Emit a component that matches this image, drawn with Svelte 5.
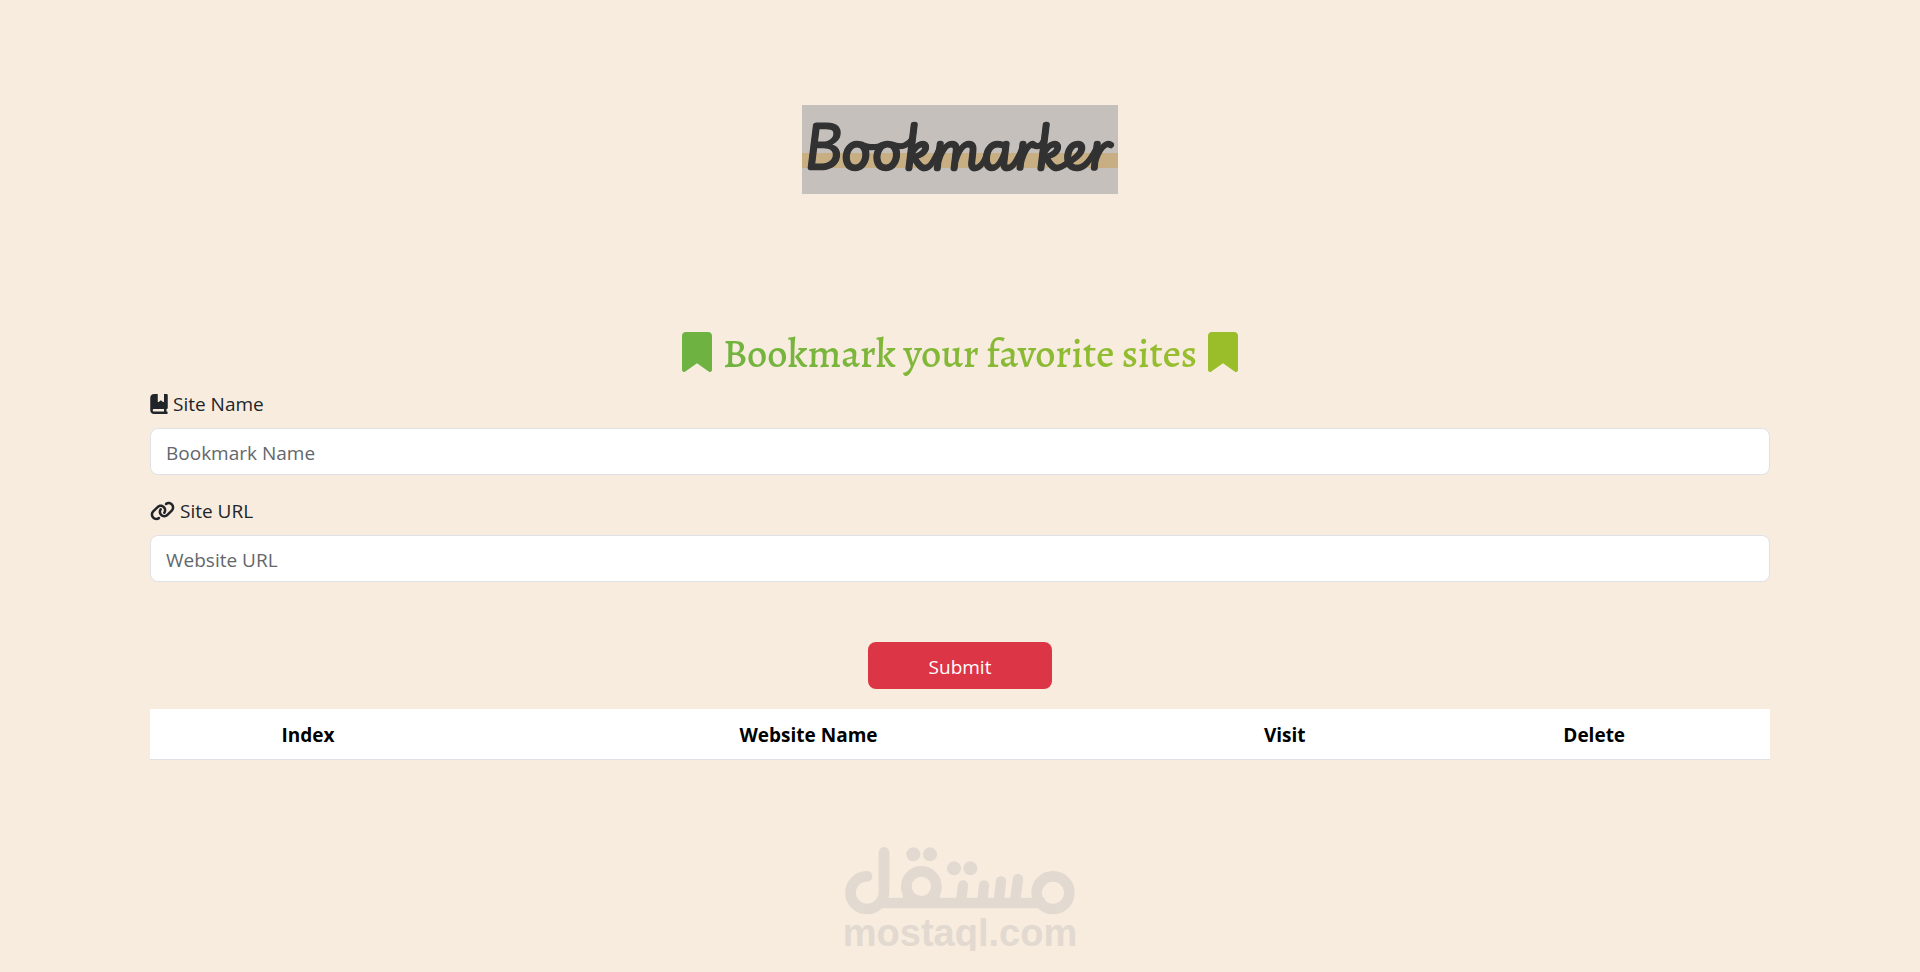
<script>
	let siteName = $state('');
	let siteUrl = $state('');
	let bookmarks = $state([]);

	function addBookmark(event) {
		event.preventDefault();
		if (!siteName || !siteUrl) return;
		bookmarks.push({ name: siteName, url: siteUrl });
		siteName = '';
		siteUrl = '';
	}

	function removeBookmark(index) {
		bookmarks.splice(index, 1);
	}
</script>

{#snippet bookmarkIcon(color)}
	<svg class="bookmark-icon {color}" viewBox="0 0 384 512" aria-hidden="true">
		<path d="M0 48V487.700C0 501.100 10.900 512 24.300 512c5 0 9.900-1.500 14-4.400L192 400 345.700 507.600c4.100 2.900 9 4.400 14 4.400c13.400 0 24.300-10.900 24.300-24.300V48c0-26.500-21.500-48-48-48H48C21.500 0 0 21.500 0 48z" />
	</svg>
{/snippet}

<main class="container">
	<header>
		<h1>Bookmarker</h1>
	</header>

	<form onsubmit={addBookmark}>
		<h2>
			{@render bookmarkIcon('green')}
			<span>Bookmark your favorite sites</span>
			{@render bookmarkIcon('lime')}
		</h2>

		<div class="field">
			<label for="siteName">
				<svg class="book-icon" viewBox="0 0 448 512" aria-hidden="true">
					<path d="M0 96C0 43 43 0 96 0h96V190.700c0 13.400 15.500 20.900 26 12.500L272 160l54 43.200c10.500 8.400 26 .9 26-12.500V0h32 32c17.700 0 32 14.300 32 32V352c0 17.700-14.300 32-32 32v64c17.700 0 32 14.300 32 32s-14.300 32-32 32H384 96c-53 0-96-43-96-96V96zM64 416c0 17.700 14.300 32 32 32H352V384H96c-17.700 0-32 14.300-32 32z" />
				</svg>
				Site Name
			</label>
			<input id="siteName" type="text" placeholder="Bookmark Name" bind:value={siteName} />
		</div>

		<div class="field">
			<label for="siteUrl">
				<svg class="link-icon" viewBox="0 0 640 512" aria-hidden="true">
					<path d="M579.800 267.700c56.500-56.500 56.500-148 0-204.500c-50-50-128.800-56.500-186.300-15.400l-1.600 1.100c-14.400 10.300-17.700 30.300-7.400 44.600s30.300 17.700 44.600 7.400l1.600-1.100c32.100-22.900 76-19.300 103.800 8.600c31.500 31.500 31.500 82.500 0 114L422.300 334.800c-31.500 31.500-82.500 31.500-114 0c-27.900-27.900-31.500-71.800-8.600-103.800l1.100-1.600c10.300-14.400 6.900-34.400-7.400-44.600s-34.400-6.900-44.600 7.400l-1.100 1.600C206.500 251.200 213 330 263 380c56.500 56.500 148 56.500 204.500 0L579.800 267.700zM60.200 244.300c-56.500 56.500-56.500 148 0 204.500c50 50 128.800 56.500 186.300 15.400l1.600-1.100c14.400-10.300 17.700-30.300 7.400-44.600s-30.300-17.700-44.600-7.400l-1.600 1.100c-32.100 22.900-76 19.300-103.800-8.600C74 372 74 321 105.500 289.500L217.700 177.200c31.500-31.500 82.500-31.500 114 0c27.900 27.900 31.500 71.800 8.600 103.900l-1.100 1.600c-10.300 14.400-6.900 34.400 7.400 44.600s34.400 6.900 44.600-7.400l1.100-1.600C433.500 260.800 427 182 377 132c-56.500-56.500-148-56.500-204.500 0L60.200 244.300z" />
				</svg>
				Site URL
			</label>
			<input id="siteUrl" type="text" placeholder="Website URL" bind:value={siteUrl} />
		</div>

		<button class="submit" type="submit">Submit</button>
	</form>

	<table>
		<thead>
			<tr>
				<th class="col-index">Index</th>
				<th class="col-name">Website Name</th>
				<th class="col-visit">Visit</th>
				<th>Delete</th>
			</tr>
		</thead>
		<tbody>
			{#each bookmarks as bookmark, i}
				<tr>
					<td>{i + 1}</td>
					<td>{bookmark.name}</td>
					<td><a href={bookmark.url}>Visit</a></td>
					<td><button type="button" onclick={() => removeBookmark(i)}>Delete</button></td>
				</tr>
			{/each}
		</tbody>
	</table>

	<footer>
		<svg class="logo" viewBox="45 51 690 202" aria-hidden="true">
			<g fill="none" stroke="currentColor" stroke-width="32" stroke-linecap="round">
				<path d="M111 138A49 49 0 1 0 110 236C139 236 162 213 162 185V66" />
				<path d="M140 218H645" stroke-linecap="butt" />
				<circle cx="669" cy="187" r="49" />
				<circle cx="274" cy="168" r="45" />
				<path d="M393 214L399 165M457 214L462 165M506 214L513 153M555 214L564 146" stroke-width="31" />
			</g>
			<g fill="currentColor">
				<path d="M213 168C213 184 220 192 219 204H329C328 192 335 184 335 168H305A31 31 0 0 1 243 168Z" />
				<circle cx="250" cy="72" r="21" />
				<circle cx="300" cy="72" r="21" />
				<circle cx="372" cy="114" r="21" />
				<circle cx="421" cy="114" r="21" />
			</g>
		</svg>
		<span>mostaql.com</span>
	</footer>
</main>

<style>
	:global(body) {
		background: #f8ecde;
		color: #212529;
		font-family: 'Segoe UI', 'Open Sans', 'Noto Sans', sans-serif;
		font-size: 19px;
		line-height: 30px;
	}

	.container {
		max-width: 1620px;
		margin: 0 auto;
		padding: 105px 15px 0;
		text-align: center;
	}

	header {
		display: flex;
		justify-content: center;
		margin-bottom: 136px;
	}

	h1 {
		box-sizing: border-box;
		min-width: 316px;
		margin: 0;
		padding: 0 4px 6px 0;
		background: linear-gradient(#c5c0bc 54%, #c7ae83 54%, #c7ae83 71%, #c5c0bc 71%);
		color: #323232;
		font-family: 'Playwrite GB S', Lato, sans-serif;
		font-size: 51px;
		font-style: italic;
		font-weight: 700;
		line-height: 83px;
		-webkit-text-stroke: 1px #323232;
	}

	h2 {
		display: flex;
		justify-content: center;
		gap: 11px;
		margin: 0 0 11px;
		font-family: Alegreya, 'Liberation Serif', serif;
		font-size: 40px;
		font-weight: 500;
		line-height: 48px;
	}

	h2 span {
		background: linear-gradient(90deg, #71b340, #98be2c);
		background-clip: text;
		color: transparent;
	}

	.bookmark-icon {
		width: 30px;
		height: 40px;
		margin-top: 2px;
		fill: #6eb242;
	}

	.bookmark-icon.lime {
		fill: #9abe2a;
	}

	form {
		display: flow-root;
	}

	.field {
		margin-bottom: 21px;
	}

	label {
		display: flex;
		align-items: center;
		gap: 5px;
		margin-bottom: 9px;
	}

	label svg {
		height: 20px;
		fill: #212529;
	}

	.book-icon {
		width: 18px;
	}

	.link-icon {
		width: 25px;
	}

	input {
		box-sizing: border-box;
		display: block;
		width: 100%;
		height: 47px;
		padding: 8px 15px 6px;
		border: 1px solid #dee2e6;
		border-radius: 8px;
		background: #fff;
		color: #212529;
		font: inherit;
	}

	input::placeholder {
		color: #63676b;
		opacity: 1;
	}

	.submit {
		display: block;
		min-width: 184px;
		height: 47px;
		margin: 60px auto 20px;
		padding: 2px 15px 0;
		border: 0;
		border-radius: 8px;
		background: #dc3545;
		color: #fff;
		font: inherit;
	}

	table {
		width: 100%;
		border-collapse: collapse;
		background: #fff;
		color: #000;
	}

	th,
	td {
		padding: 11px 10px 9px;
		border-bottom: 1px solid #dee2e6;
	}

	.col-index {
		width: 19.5%;
	}

	.col-name {
		width: 42.3%;
	}

	.col-visit {
		width: 16.5%;
	}

	footer {
		display: flex;
		flex-direction: column;
		align-items: center;
		margin-top: 87px;
		color: #e2d9d0;
	}

	.logo {
		width: 230px;
		height: 68px;
	}

	footer span {
		font-family: 'Liberation Sans', Arial, sans-serif;
		font-size: 38px;
		font-weight: 700;
		line-height: 36px;
	}
</style>
